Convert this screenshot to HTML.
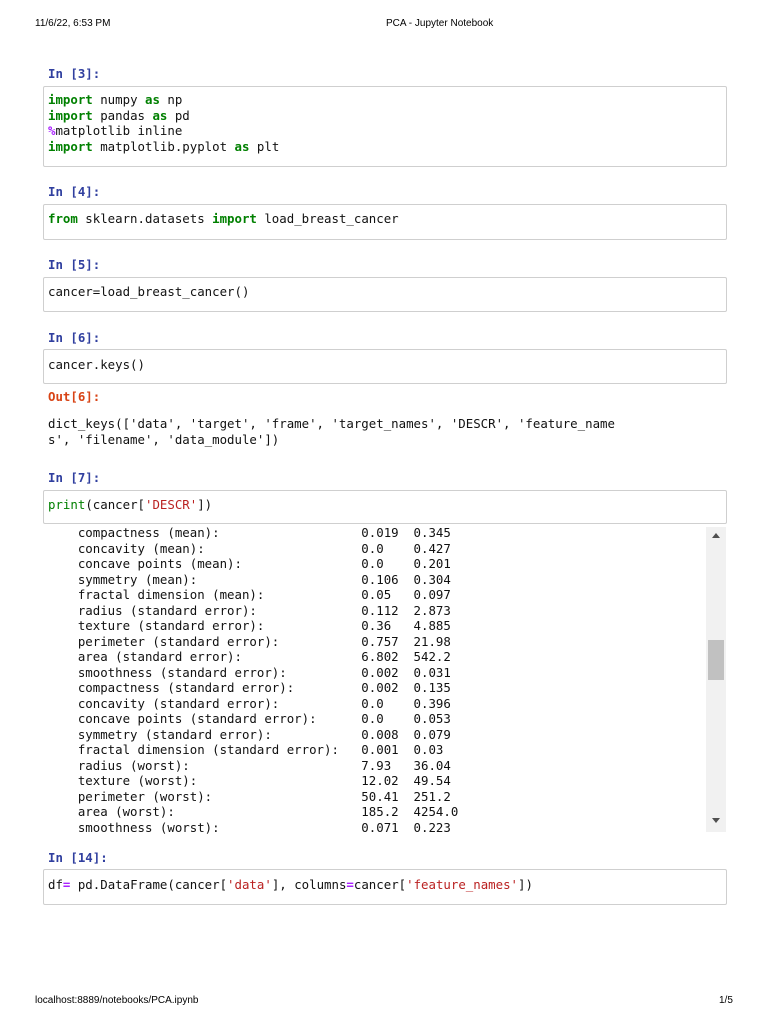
<!DOCTYPE html>
<html><head><meta charset="utf-8"><style>
body{margin:0;width:768px;height:1024px;background:#fff;position:relative;overflow:hidden;font-family:"DejaVu Sans Mono",monospace;}
.h{position:absolute;font-family:"Liberation Sans",sans-serif;font-size:10px;color:#000;top:18px}
.p{position:absolute;left:48px;font-size:12.4px;font-weight:bold;color:#303f9f;white-space:pre}
.o{color:#d84315}
.box{position:absolute;left:43px;width:682px;border:1px solid #cfcfcf;background:#fff;border-radius:2px}
.c{position:absolute;left:48px;font-size:12.4px;line-height:15.5px;white-space:pre;color:#111}
.k{color:#008000;font-weight:bold}.s{color:#ba2121}.m{color:#aa22ff;font-weight:bold}.b{color:#008000}
</style></head><body>
<div class="h" style="left:35px">11/6/22, 6:53 PM</div>
<div class="h" style="left:386px">PCA - Jupyter Notebook</div>

<div class="p" style="top:66px">In [3]:</div>
<div class="box" style="top:86px;height:79px"></div>
<div class="c" style="top:92px"><span class="k">import</span> numpy <span class="k">as</span> np
<span class="k">import</span> pandas <span class="k">as</span> pd
<span class="m">%</span>matplotlib inline
<span class="k">import</span> matplotlib.pyplot <span class="k">as</span> plt</div>

<div class="p" style="top:184px">In [4]:</div>
<div class="box" style="top:204px;height:34px"></div>
<div class="c" style="top:211px"><span class="k">from</span> sklearn.datasets <span class="k">import</span> load_breast_cancer</div>

<div class="p" style="top:257px">In [5]:</div>
<div class="box" style="top:277px;height:33px"></div>
<div class="c" style="top:284px">cancer=load_breast_cancer()</div>

<div class="p" style="top:330px">In [6]:</div>
<div class="box" style="top:349px;height:33px"></div>
<div class="c" style="top:357px">cancer.keys()</div>

<div class="p o" style="top:389px">Out[6]:</div>
<div class="c" style="top:416px">dict_keys(['data', 'target', 'frame', 'target_names', 'DESCR', 'feature_name
s', 'filename', 'data_module'])</div>

<div class="p" style="top:470px">In [7]:</div>
<div class="box" style="top:490px;height:32px"></div>
<div class="c" style="top:497px"><span class="b">print</span>(cancer[<span class="s">'DESCR'</span>])</div>

<div style="position:absolute;left:706px;top:527px;width:20px;height:305px;background:#f1f1f1"></div>
<div style="position:absolute;left:708px;top:640px;width:16px;height:40px;background:#c1c1c1"></div>
<div style="position:absolute;left:712px;top:533px;width:0;height:0;border-left:4px solid transparent;border-right:4px solid transparent;border-bottom:5px solid #505050"></div>
<div style="position:absolute;left:712px;top:818px;width:0;height:0;border-left:4px solid transparent;border-right:4px solid transparent;border-top:5px solid #505050"></div>
<div class="c" style="top:525px">    compactness (mean):                   0.019  0.345
    concavity (mean):                     0.0    0.427
    concave points (mean):                0.0    0.201
    symmetry (mean):                      0.106  0.304
    fractal dimension (mean):             0.05   0.097
    radius (standard error):              0.112  2.873
    texture (standard error):             0.36   4.885
    perimeter (standard error):           0.757  21.98
    area (standard error):                6.802  542.2
    smoothness (standard error):          0.002  0.031
    compactness (standard error):         0.002  0.135
    concavity (standard error):           0.0    0.396
    concave points (standard error):      0.0    0.053
    symmetry (standard error):            0.008  0.079
    fractal dimension (standard error):   0.001  0.03
    radius (worst):                       7.93   36.04
    texture (worst):                      12.02  49.54
    perimeter (worst):                    50.41  251.2
    area (worst):                         185.2  4254.0
    smoothness (worst):                   0.071  0.223</div>

<div class="p" style="top:850px">In [14]:</div>
<div class="box" style="top:869px;height:34px"></div>
<div class="c" style="top:877px">df<span class="m">=</span> pd.DataFrame(cancer[<span class="s">'data'</span>], columns<span class="m">=</span>cancer[<span class="s">'feature_names'</span>])</div>

<div class="h" style="left:35px;top:995px">localhost:8889/notebooks/PCA.ipynb</div>
<div class="h" style="left:719px;top:995px">1/5</div>
</body></html>
